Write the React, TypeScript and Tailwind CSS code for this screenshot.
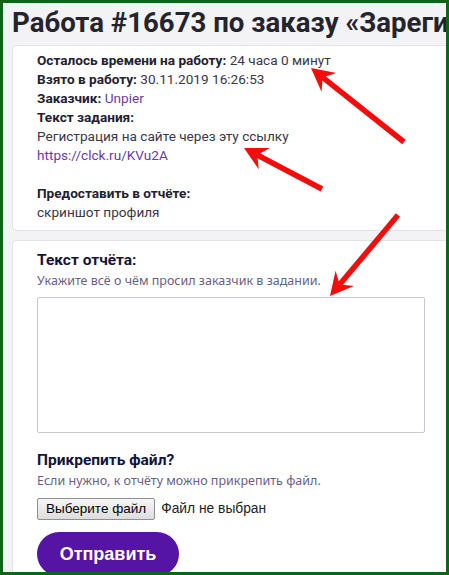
import React from "react";

const font = { fontFamily: 'Roboto, "Noto Sans", sans-serif' };

function Arrow(props: { tail: [number, number]; tip: [number, number] }) {
  const [tx, ty] = props.tail;
  const [px, py] = props.tip;
  const dx = px - tx;
  const dy = py - ty;
  const len = Math.sqrt(dx * dx + dy * dy);
  const ux = dx / len;
  const uy = dy / len;
  const bx = px - 23 * ux;
  const by = py - 23 * uy;
  const nx = px - 15 * ux;
  const ny = py - 15 * uy;
  const pxp = -uy * 12;
  const pyp = ux * 12;
  return (
    <g fill="#f20d0d" stroke="#f20d0d">
      <line x1={tx} y1={ty} x2={nx} y2={ny} strokeWidth={5.5} />
      <polygon
        strokeWidth={0}
        points={`${px},${py} ${bx + pxp},${by + pyp} ${nx},${ny} ${bx - pxp},${by - pyp}`}
      />
    </g>
  );
}

function Row(props: { label: string; value?: string; link?: boolean }) {
  return (
    <div>
      <span className="font-bold text-[#23212f]">{props.label}</span>
      {props.value && (
        <span className={props.link ? "text-[#6a3aa8]" : "text-[#3a3748]"}>
          {" "}
          {props.value}
        </span>
      )}
    </div>
  );
}

export default function App() {
  return (
    <div
      className="relative h-[575px] w-[449px] overflow-hidden border-[3px] border-[#0d6516] bg-[#f3f3f6]"
      style={font}
    >
      <div className="pl-[9px]">
        <h1 className="whitespace-nowrap pt-[1px] text-[27.6px] leading-[38px] font-bold text-[#25242c]">
          Работа #16673 по заказу «Зарегистрироваться»
        </h1>

        <div className="mt-[3px] rounded-l-[5px] border border-r-0 border-[#e3e2ea] bg-white pt-[5px] pb-2 pl-6 text-[13.6px] leading-[19px] text-[#3a3748]">
          <div className="whitespace-nowrap">
            <span className="font-bold text-[#23212f]">
              Осталось времени на работу:
            </span>{" "}
            24 часа 0 минут
          </div>
          <Row label="Взято в работу:" value="30.11.2019 16:26:53" />
          <Row label="Заказчик:" value="Unpier" link />
          <Row label="Текст задания:" />
          <div>Регистрация на сайте через эту ссылку</div>
          <div className="text-[#6a3aa8]">https://clck.ru/KVu2A</div>
          <div className="h-[19px]" />
          <Row label="Предоставить в отчёте:" />
          <div>скриншот профиля</div>
        </div>

        <div className="mt-[9px] rounded-l-[5px] border border-r-0 border-[#e3e2ea] bg-white pt-[8px] pl-6 pb-6">
          <div className="text-[15.5px] leading-[22px] font-bold text-[#15143a]">
            Текст отчёта:
          </div>
          <div
            className="mt-[1px] text-[12.5px] leading-[17px] text-[#6a6182]"
            style={{ fontFamily: '"Noto Sans", sans-serif' }}
          >
            Укажите всё о чём просил заказчик в задании.
          </div>
          <textarea className="mt-[8px] block h-[136px] w-[388px] resize-none rounded-[2px] border border-[#c9c7d4] bg-white" />

          <div className="mt-[16px] text-[15.5px] leading-[22px] font-bold text-[#15143a]">
            Прикрепить файл?
          </div>
          <div
            className="mt-[1px] text-[12.5px] leading-[17px] text-[#6a6182]"
            style={{ fontFamily: '"Noto Sans", sans-serif' }}
          >
            Если нужно, к отчёту можно прикрепить файл.
          </div>
          <div
            className="mt-[9px] flex items-center gap-[6px] text-[13.8px] text-[#222]"
            style={{ fontFamily: '"Liberation Sans", Arial, sans-serif' }}
          >
            <button className="h-[22px] rounded-[2px] border border-[#8f8f8f] bg-[linear-gradient(#f6f6f6,#dddddd)] px-[8px] text-[13.5px] leading-[20px] text-black">
              Выберите файл
            </button>
            <span>Файл не выбран</span>
          </div>
          <button
            className="mt-[12px] h-[44px] w-[142px] rounded-full bg-[#5614a4] text-[18px] font-bold text-white"
            style={{ fontFamily: '"Liberation Sans", Arial, sans-serif' }}
          >
            Отправить
          </button>
        </div>
      </div>

      <svg
        className="pointer-events-none absolute top-[-3px] left-[-3px]"
        width={449}
        height={575}
        viewBox="0 0 449 575"
      >
        <Arrow tail={[404, 142]} tip={[311, 68]} />
        <Arrow tail={[322, 189]} tip={[244, 148]} />
        <Arrow tail={[398, 215]} tip={[330, 296]} />
      </svg>
    </div>
  );
}
